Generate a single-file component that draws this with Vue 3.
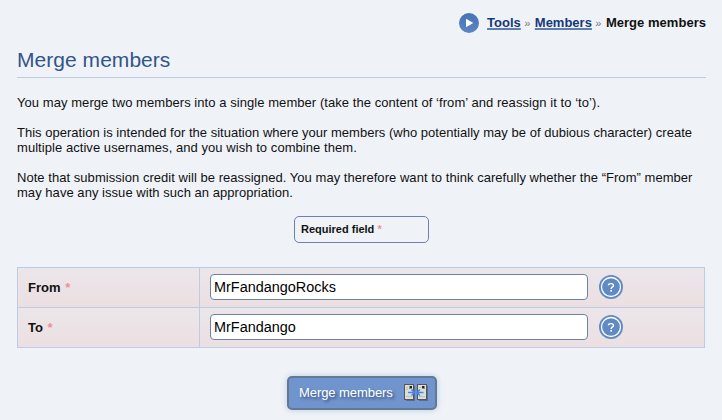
<script setup>
import { ref } from 'vue'

const fields = ref([
  { id: 'from', label: 'From', value: 'MrFandangoRocks' },
  { id: 'to', label: 'To', value: 'MrFandango' },
])
</script>

<template>
  <main class="page">
    <nav class="breadcrumbs">
      <svg class="play" viewBox="0 0 20 20" width="20" height="20">
        <defs>
          <linearGradient id="playFill" x1="0" y1="0" x2="0" y2="1">
            <stop offset="0" stop-color="#4673b5" />
            <stop offset="1" stop-color="#5b84c4" />
          </linearGradient>
        </defs>
        <circle cx="10" cy="10" r="10" fill="url(#playFill)" />
        <path d="M7 5.7 L14.3 10 L7 14.3 Z" fill="#fff" />
      </svg>
      <a href="#">Tools</a><span class="sep">»</span><a href="#">Members</a><span class="sep">»</span><span class="current">Merge members</span>
    </nav>

    <h1>Merge members</h1>

    <p class="intro">You may merge two members into a single member (take the content of ‘from’ and reassign it to ‘to’).</p>
    <p class="purpose">This operation is intended for the situation where your members (who potentially may be of dubious character) create<br><span class="loose">multiple active usernames, and you wish to combine them.</span></p>
    <p class="note">Note that submission credit will be reassigned. You may therefore want to think carefully whether the “From” member<br>may have any issue with such an appropriation.</p>

    <div class="legend">Required field <span class="star">*</span></div>

    <form @submit.prevent>
      <div class="table">
        <div v-for="field in fields" :key="field.id" class="row">
          <label class="label" :for="field.id">{{ field.label }} <span class="star">*</span></label>
          <div class="value">
            <input :id="field.id" v-model="field.value" type="text">
            <svg class="help" viewBox="0 0 24 24" width="24" height="24">
              <circle cx="12" cy="12" r="12" fill="#5f8ac3" />
              <circle cx="12" cy="12" r="9.5" fill="none" stroke="#fff" stroke-width="1.3" />
              <path d="M9.4 10.2 Q9.5 8.6 12 8.6 Q14.5 8.6 14.5 10.4 Q14.5 11.4 13.2 12.2 Q12.2 12.8 12.2 14" fill="none" stroke="#fff" stroke-width="1.4" />
              <rect x="11.3" y="15" width="1.7" height="1.6" fill="#fff" />
            </svg>
          </div>
        </div>
      </div>

      <button class="submit" type="submit">
        <span>Merge members</span>
        <svg viewBox="0 0 24 18" width="24" height="18" shape-rendering="crispEdges">
          <path d="M2 2h9v15h-9zM15 2h9v15h-9z" fill="#5a6c8d" />
          <path d="M0 0h10v16h-10zM13 0h10v16h-10z" fill="#555" />
          <path d="M1 1h8v14h-8zM14 1h8v14h-8z" fill="#deded9" />
          <path d="M2 3h2v1h-2zM2 5h2v1h-2zM2 12h6v1h-6zM15 3h2v1h-2zM15 12h6v1h-6z" fill="#bcbcb8" />
          <path d="M5 2h3v3h-3zM18 2h3v3h-3z" fill="#888" />
          <path d="M6 2h2v2h-2zM18 2h2v2h-2z" fill="#222" />
          <path d="M4 8.5h6.5M7.5 5.5l3 3l-3 3M19.5 8.5h-6.5M16 5.5l-3 3l3 3" fill="none" stroke="#4388e5" stroke-width="1.5" shape-rendering="auto" />
        </svg>
      </button>
    </form>
  </main>
</template>

<style>
body {
  background: #eff3f8;
}
</style>

<style scoped>
.page {
  box-sizing: border-box;
  height: 420px;
  padding: 13px 16px 0 17px;
  overflow: hidden;
  background: #eff3f8;
  color: #111;
  font: 13px/15px "Liberation Sans", Arial, sans-serif;
}
.breadcrumbs {
  display: flex;
  justify-content: flex-end;
  align-items: center;
  height: 20px;
  font-weight: bold;
}
.play {
  margin-right: 8px;
}
.breadcrumbs a {
  position: relative;
  top: -1px;
  color: #13397a;
  text-decoration: underline;
  text-decoration-color: #5f7cab;
  text-decoration-thickness: 2px;
}
.sep {
  width: 14px;
  box-sizing: border-box;
  padding-right: 1px;
  text-align: center;
  color: #777;
  font-size: 11px;
  font-weight: normal;
}
.current {
  position: relative;
  top: -1px;
  letter-spacing: 0.03px;
  color: #111;
}
h1 {
  height: 29px;
  margin: 15px 0 17px;
  border-bottom: 1px solid #bdcbe4;
  color: #335588;
  font-size: 21px;
  font-weight: normal;
  line-height: 24px;
  letter-spacing: 0.04px;
}
p {
  margin: 0 0 15px;
  white-space: nowrap;
}
.intro {
  letter-spacing: 0.06px;
}
.purpose {
  letter-spacing: 0.02px;
}
.loose {
  letter-spacing: 0.055px;
}
.note {
  letter-spacing: 0.043px;
}
.star {
  color: #e8929a;
}
.label .star {
  margin-left: 1px;
}
.legend {
  box-sizing: border-box;
  width: 135px;
  height: 27px;
  margin: 16px 0 0 277px;
  padding: 5px 6px;
  border: 1px solid #6c82aa;
  border-radius: 5px;
  font-size: 11px;
  font-weight: bold;
}
.table {
  box-sizing: border-box;
  width: 688px;
  margin-top: 24px;
  border: 1px solid #bccce5;
  border-bottom: 0;
}
.row {
  display: flex;
  box-sizing: border-box;
  height: 40px;
  border-bottom: 1px solid #bccce5;
  background: linear-gradient(#ebe6ea, #ecdfe1);
}
.label {
  box-sizing: border-box;
  width: 182px;
  padding: 12px 10px;
  border-right: 1px solid #bccce5;
  font-weight: bold;
}
.value {
  display: flex;
  align-items: center;
  padding: 0 0 1px 10px;
}
input {
  box-sizing: border-box;
  width: 378px;
  height: 26px;
  padding: 0 3px;
  border: 1px solid #6c82aa;
  border-radius: 4px;
  background: #fff;
  color: #000;
  font: 14.45px "Liberation Sans", Arial, sans-serif;
}
.help {
  margin-left: 11px;
}
.submit {
  display: flex;
  align-items: center;
  justify-content: space-between;
  box-sizing: border-box;
  width: 150px;
  height: 34px;
  margin: 28px 0 0 270px;
  padding: 0 7px 1px 10px;
  border: 2px solid #647991;
  border-radius: 5px;
  background: #7094cd;
  box-shadow: 0 0 6px #b8c8dd;
  color: #fff;
  font: 13px "Liberation Sans", Arial, sans-serif;
  letter-spacing: -0.07px;
  text-shadow: 2px 2px 3px #334c75;
}
</style>
